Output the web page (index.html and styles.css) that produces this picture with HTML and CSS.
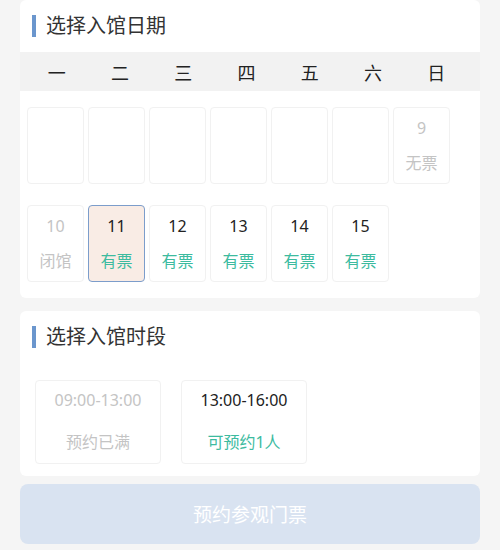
FILE: index.html
```html
<!DOCTYPE html>
<html lang="zh">
<head>
<meta charset="utf-8">
<link rel="stylesheet" href="styles.css">
</head>
<body>
<div class="page">
  <section class="card">
    <div class="title"><span class="bar"></span><span class="title-text">选择入馆日期</span></div>
    <div class="weekdays">
      <span>一</span><span>二</span><span>三</span><span>四</span><span>五</span><span>六</span><span>日</span>
    </div>
    <div class="days">
      <div class="day"></div>
      <div class="day"></div>
      <div class="day"></div>
      <div class="day"></div>
      <div class="day"></div>
      <div class="day"></div>
      <div class="day off"><span class="num">9</span><span class="st">无票</span></div>
      <div class="day off"><span class="num">10</span><span class="st">闭馆</span></div>
      <div class="day on sel"><span class="num">11</span><span class="st">有票</span></div>
      <div class="day on"><span class="num">12</span><span class="st">有票</span></div>
      <div class="day on"><span class="num">13</span><span class="st">有票</span></div>
      <div class="day on"><span class="num">14</span><span class="st">有票</span></div>
      <div class="day on"><span class="num">15</span><span class="st">有票</span></div>
    </div>
  </section>
  <section class="card card2">
    <div class="title"><span class="bar"></span><span class="title-text">选择入馆时段</span></div>
    <div class="slots">
      <div class="slot off"><span class="time">09:00-13:00</span><span class="st">预约已满</span></div>
      <div class="slot on"><span class="time">13:00-16:00</span><span class="st">可预约1人</span></div>
    </div>
  </section>
</div>
<footer class="footer"><button class="btn">预约参观门票</button></footer>
</body>
</html>
```
FILE: styles.css
```css
* { box-sizing: border-box; }
html, body { margin: 0; padding: 0; }
body {
  background: #f5f5f5;
  font-family: "Noto Sans", "Noto Sans CJK SC", sans-serif;
  color: #333;
  height: 550px;
  overflow: hidden;
}
.page { padding: 0 20px; }
.card {
  background: #fff;
  border-radius: 6px;
  margin-bottom: 13px;
}
.title {
  height: 52px;
  display: flex;
  align-items: center;
  padding-left: 12px;
}
.bar {
  width: 4px;
  height: 22px;
  background: #6b96cd;
  margin-right: 10px;
}
.title-text {
  font-size: 20px;
  color: #333;
  line-height: 1;
}
.weekdays {
  background: #f2f2f2;
  height: 39px;
  display: grid;
  grid-template-columns: repeat(7, 1fr);
  align-items: center;
  padding: 0 12px 0 5px;
  font-size: 18px;
  color: #222;
}
.weekdays span { text-align: center; }
.days {
  display: grid;
  grid-template-columns: repeat(7, 57px);
  column-gap: 4px;
  row-gap: 21px;
  padding: 16px 0 16px 7px;
}
.day {
  height: 77px;
  border: 1px solid #f1f1f1;
  border-radius: 4px;
  display: flex;
  flex-direction: column;
  align-items: center;
  font-size: 16px;
}
.num { margin-top: 8px; line-height: 24px; }
.day .st { margin-top: 11px; line-height: 24px; }
.day.off { color: #c4c4c4; }
.day.on .num { color: #222; }
.day.on .st { color: #3dbb9f; }
.day.sel {
  background: #f9ece5;
  border: 1px solid #7c9dcb;
}
.card2 { height: 165px; }
.slots {
  display: flex;
  gap: 20px;
  padding: 17px 15px;
}
.slot {
  width: 126px;
  height: 84px;
  border: 1px solid #f1f1f1;
  border-radius: 4px;
  display: flex;
  flex-direction: column;
  align-items: center;
  font-size: 16px;
}
.time { margin-top: 7px; line-height: 24px; }
.slot .st { margin-top: 18px; line-height: 24px; }
.slot.off { color: #c4c4c4; }
.slot.on .time { color: #222; }
.slot.on .st { color: #3dbb9f; }
.footer {
  position: fixed;
  left: 0;
  right: 0;
  bottom: 0;
  background: #f5f5f5;
  padding: 7px 20px 6px;
}
.btn {
  display: block;
  width: 100%;
  height: 60px;
  border: 0;
  border-radius: 8px;
  background: #d9e3f1;
  color: #fff;
  font-family: "Noto Sans", "Noto Sans CJK SC", sans-serif;
  font-size: 19px;
}
```
